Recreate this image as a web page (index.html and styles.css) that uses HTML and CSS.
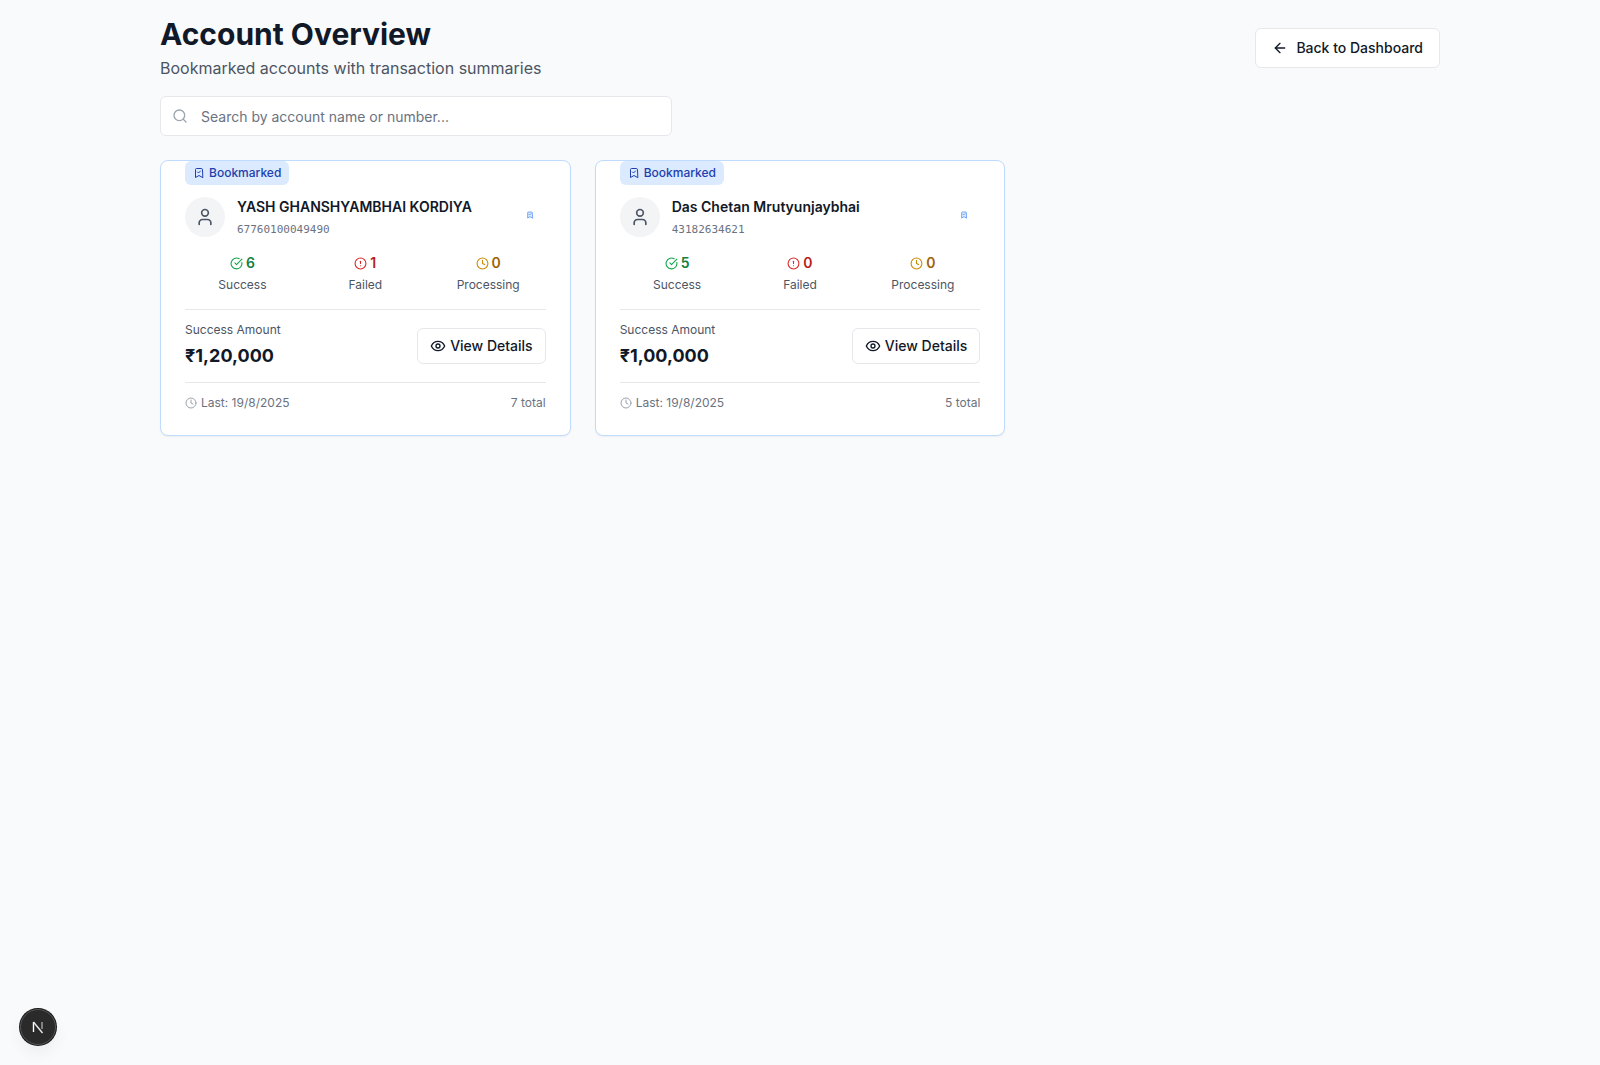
FILE: index.html

```html
<!DOCTYPE html>
<html lang="en">
<head>
    <meta charset="UTF-8">
    <meta name="viewport" content="width=device-width, initial-scale=1.0">
    <title>Account Overview</title>
    <link rel="stylesheet" href="styles.css">
</head>
<body>
    <svg class="icon-defs" aria-hidden="true">
        <symbol id="i-bookmark" viewBox="0 0 24 24"><path d="m19 21-7-4-7 4V5a2 2 0 0 1 2-2h10a2 2 0 0 1 2 2Z"/><path d="m9 10 2 2 4-4"/></symbol>
        <symbol id="i-user" viewBox="0 0 24 24"><path d="M19 21v-2a4 4 0 0 0-4-4H9a4 4 0 0 0-4 4v2"/><circle cx="12" cy="7" r="4"/></symbol>
        <symbol id="i-check" viewBox="0 0 24 24"><path d="M21.801 10A10 10 0 1 1 17 3.335"/><path d="m9 11 3 3L22 4"/></symbol>
        <symbol id="i-alert" viewBox="0 0 24 24"><circle cx="12" cy="12" r="10"/><line x1="12" y1="8" x2="12" y2="12"/><line x1="12" y1="16" x2="12.01" y2="16"/></symbol>
        <symbol id="i-clock" viewBox="0 0 24 24"><circle cx="12" cy="12" r="10"/><polyline points="12 6 12 12 16 14"/></symbol>
        <symbol id="i-eye" viewBox="0 0 24 24"><path d="M2 12s3-7 10-7 10 7 10 7-3 7-10 7-10-7-10-7Z"/><circle cx="12" cy="12" r="3"/></symbol>
        <symbol id="i-search" viewBox="0 0 24 24"><circle cx="11" cy="11" r="8"/><path d="m21 21-4.3-4.3"/></symbol>
        <symbol id="i-back" viewBox="0 0 24 24"><path d="m12 19-7-7 7-7"/><path d="M19 12H5"/></symbol>
    </svg>

    <div class="container">
        <header class="page-header">
            <div>
                <h1>Account Overview</h1>
                <p class="subtitle">Bookmarked accounts with transaction summaries</p>
            </div>
            <button type="button" class="btn back-btn">
                <svg class="icon icon-16"><use href="#i-back"/></svg>
                Back to Dashboard
            </button>
        </header>

        <div class="search">
            <svg class="icon icon-16 search-icon"><use href="#i-search"/></svg>
            <input type="text" class="search-input" placeholder="Search by account name or number...">
        </div>

        <div class="card-grid">
            <div class="card">
                <span class="badge">
                    <svg class="icon icon-12"><use href="#i-bookmark"/></svg>
                    Bookmarked
                </span>
                <div class="account-row">
                    <div class="avatar"><svg class="icon icon-20"><use href="#i-user"/></svg></div>
                    <div class="account-info">
                        <div class="account-name">YASH GHANSHYAMBHAI KORDIYA</div>
                        <div class="account-number">67760100049490</div>
                    </div>
                    <div class="mini-mark"><svg class="icon icon-8"><use href="#i-bookmark"/></svg></div>
                </div>
                <div class="stats">
                    <div class="stat">
                        <div class="stat-value success">
                            <svg class="icon icon-13"><use href="#i-check"/></svg>6
                        </div>
                        <div class="stat-label">Success</div>
                    </div>
                    <div class="stat">
                        <div class="stat-value failed">
                            <svg class="icon icon-13"><use href="#i-alert"/></svg>1
                        </div>
                        <div class="stat-label">Failed</div>
                    </div>
                    <div class="stat">
                        <div class="stat-value processing">
                            <svg class="icon icon-13"><use href="#i-clock"/></svg>0
                        </div>
                        <div class="stat-label">Processing</div>
                    </div>
                </div>
                <div class="amount-row">
                    <div>
                        <div class="amount-label">Success Amount</div>
                        <div class="amount">₹1,20,000</div>
                    </div>
                    <button type="button" class="btn details-btn">
                        <svg class="icon icon-16"><use href="#i-eye"/></svg>
                        View Details
                    </button>
                </div>
                <div class="card-footer">
                    <span class="last-date"><svg class="icon icon-12"><use href="#i-clock"/></svg>Last: 19/8/2025</span>
                    <span>7 total</span>
                </div>
            </div>

            <div class="card">
                <span class="badge">
                    <svg class="icon icon-12"><use href="#i-bookmark"/></svg>
                    Bookmarked
                </span>
                <div class="account-row">
                    <div class="avatar"><svg class="icon icon-20"><use href="#i-user"/></svg></div>
                    <div class="account-info">
                        <div class="account-name">Das Chetan Mrutyunjaybhai</div>
                        <div class="account-number">43182634621</div>
                    </div>
                    <div class="mini-mark"><svg class="icon icon-8"><use href="#i-bookmark"/></svg></div>
                </div>
                <div class="stats">
                    <div class="stat">
                        <div class="stat-value success">
                            <svg class="icon icon-13"><use href="#i-check"/></svg>5
                        </div>
                        <div class="stat-label">Success</div>
                    </div>
                    <div class="stat">
                        <div class="stat-value failed">
                            <svg class="icon icon-13"><use href="#i-alert"/></svg>0
                        </div>
                        <div class="stat-label">Failed</div>
                    </div>
                    <div class="stat">
                        <div class="stat-value processing">
                            <svg class="icon icon-13"><use href="#i-clock"/></svg>0
                        </div>
                        <div class="stat-label">Processing</div>
                    </div>
                </div>
                <div class="amount-row">
                    <div>
                        <div class="amount-label">Success Amount</div>
                        <div class="amount">₹1,00,000</div>
                    </div>
                    <button type="button" class="btn details-btn">
                        <svg class="icon icon-16"><use href="#i-eye"/></svg>
                        View Details
                    </button>
                </div>
                <div class="card-footer">
                    <span class="last-date"><svg class="icon icon-12"><use href="#i-clock"/></svg>Last: 19/8/2025</span>
                    <span>5 total</span>
                </div>
            </div>
        </div>
    </div>

    <div class="dev-badge">
        <svg width="16" height="16" viewBox="0 0 16 16" fill="none">
            <path d="M3.5 13V3" stroke="#fff" stroke-width="1.4"/>
            <path d="M3.5 3 L12.5 14" stroke="#e8e8e8" stroke-width="1.4"/>
            <path d="M12 3v7" stroke="#bbb" stroke-width="1.2"/>
        </svg>
    </div>
</body>
</html>
```

FILE: styles.css

```css
* {
    box-sizing: border-box;
}

body {
    margin: 0;
    min-height: 1065px;
    background-color: #f9fafb;
    color: #111827;
    font-family: Inter, "Noto Sans", sans-serif;
}

.icon-defs {
    display: none;
}

.icon {
    flex-shrink: 0;
    fill: none;
    stroke: currentColor;
    stroke-width: 2;
    stroke-linecap: round;
    stroke-linejoin: round;
}

.icon-8 { width: 8px; height: 8px; }
.icon-12 { width: 12px; height: 12px; }
.icon-13 { width: 13px; height: 13px; }
.icon-16 { width: 16px; height: 16px; }
.icon-20 { width: 20px; height: 20px; }

.container {
    width: 1280px;
    margin: 0 auto;
    padding-top: 16px;
}

.page-header {
    display: flex;
    justify-content: space-between;
    align-items: center;
    margin-bottom: 16px;
}

h1 {
    margin: 0;
    font-size: 30px;
    line-height: 36px;
    font-weight: 700;
}

.subtitle {
    margin: 4px 0 0;
    font-size: 16px;
    line-height: 24px;
    color: #4b5563;
}

.btn {
    display: inline-flex;
    align-items: center;
    gap: 8px;
    background-color: #fff;
    border: 1px solid #e5e7eb;
    border-radius: 6px;
    color: #111827;
    font-family: inherit;
    font-size: 14px;
    line-height: 20px;
    font-weight: 500;
    cursor: pointer;
}

.back-btn {
    height: 40px;
    padding: 0 16px;
}

.details-btn {
    gap: 4px;
    height: 36px;
    padding: 0 12px;
}

.search {
    position: relative;
    width: 512px;
    margin-bottom: 24px;
}

.search-icon {
    position: absolute;
    left: 12px;
    top: 12px;
    color: #9ca3af;
}

.search-input {
    display: block;
    width: 100%;
    height: 40px;
    padding: 0 12px 0 40px;
    background-color: #fff;
    border: 1px solid #e5e7eb;
    border-radius: 6px;
    font-family: inherit;
    font-size: 14px;
}

.search-input::placeholder {
    color: #6b7280;
}

.card-grid {
    display: grid;
    grid-template-columns: repeat(3, 1fr);
    gap: 24px;
    align-items: start;
}

.card {
    padding: 0 24px 24px;
    background-color: #fff;
    border: 1px solid #bfdbfe;
    border-radius: 8px;
    box-shadow: 0 1px 2px rgba(0, 0, 0, 0.05);
}

.badge {
    display: inline-flex;
    align-items: center;
    gap: 4px;
    height: 24px;
    padding: 0 8px;
    background-color: #dbeafe;
    border-radius: 6px;
    color: #1e40af;
    font-size: 12px;
    line-height: 16px;
    font-weight: 500;
    vertical-align: top;
}

.account-row {
    display: flex;
    align-items: flex-start;
    gap: 12px;
    margin-top: 12px;
}

.avatar {
    display: flex;
    align-items: center;
    justify-content: center;
    width: 40px;
    height: 40px;
    background-color: #f3f4f6;
    border-radius: 50%;
    color: #4b5563;
}

.account-info {
    flex: 1;
}

.account-name {
    font-size: 14px;
    line-height: 20px;
    font-weight: 600;
}

.account-number {
    margin-top: 6px;
    font-family: "DejaVu Sans Mono", monospace;
    font-size: 11px;
    line-height: 14px;
    color: #6b7280;
}

.mini-mark {
    display: flex;
    align-items: center;
    justify-content: center;
    width: 32px;
    height: 36px;
    color: #3b82f6;
}

.mini-mark .icon {
    fill: #dbeafe;
}

.stats {
    display: grid;
    grid-template-columns: repeat(3, 1fr);
    gap: 8px;
    margin-top: 16px;
    padding-bottom: 16px;
    border-bottom: 1px solid #e5e7eb;
}

.stat {
    text-align: center;
}

.stat-value {
    display: flex;
    align-items: center;
    justify-content: center;
    gap: 3px;
    font-size: 14px;
    line-height: 20px;
    font-weight: 600;
}

.stat-value.success { color: #15803d; }
.stat-value.success .icon { color: #16a34a; }
.stat-value.failed { color: #b91c1c; }
.stat-value.failed .icon { color: #dc2626; }
.stat-value.processing { color: #a16207; }
.stat-value.processing .icon { color: #ca8a04; }

.stat-label {
    margin-top: 4px;
    font-size: 12px;
    line-height: 16px;
    color: #4b5563;
}

.amount-row {
    display: flex;
    justify-content: space-between;
    align-items: center;
    padding: 12px 0;
    border-bottom: 1px solid #e5e7eb;
}

.amount-label {
    font-size: 12px;
    line-height: 16px;
    color: #4b5563;
}

.amount {
    margin-top: 4px;
    font-size: 18px;
    line-height: 28px;
    font-weight: 700;
}

.card-footer {
    display: flex;
    justify-content: space-between;
    align-items: center;
    padding-top: 12px;
    font-size: 12px;
    line-height: 16px;
    color: #6b7280;
}

.last-date {
    display: flex;
    align-items: center;
    gap: 4px;
}

.last-date .icon {
    color: #9ca3af;
}

.dev-badge {
    position: fixed;
    left: 20px;
    bottom: 20px;
    display: flex;
    align-items: center;
    justify-content: center;
    width: 36px;
    height: 36px;
    background-color: #2a2a2a;
    border: 1px solid #555;
    border-radius: 50%;
    box-shadow: 0 0 0 1px #1a1a1a, 0 8px 16px rgba(0, 0, 0, 0.05);
}
```
